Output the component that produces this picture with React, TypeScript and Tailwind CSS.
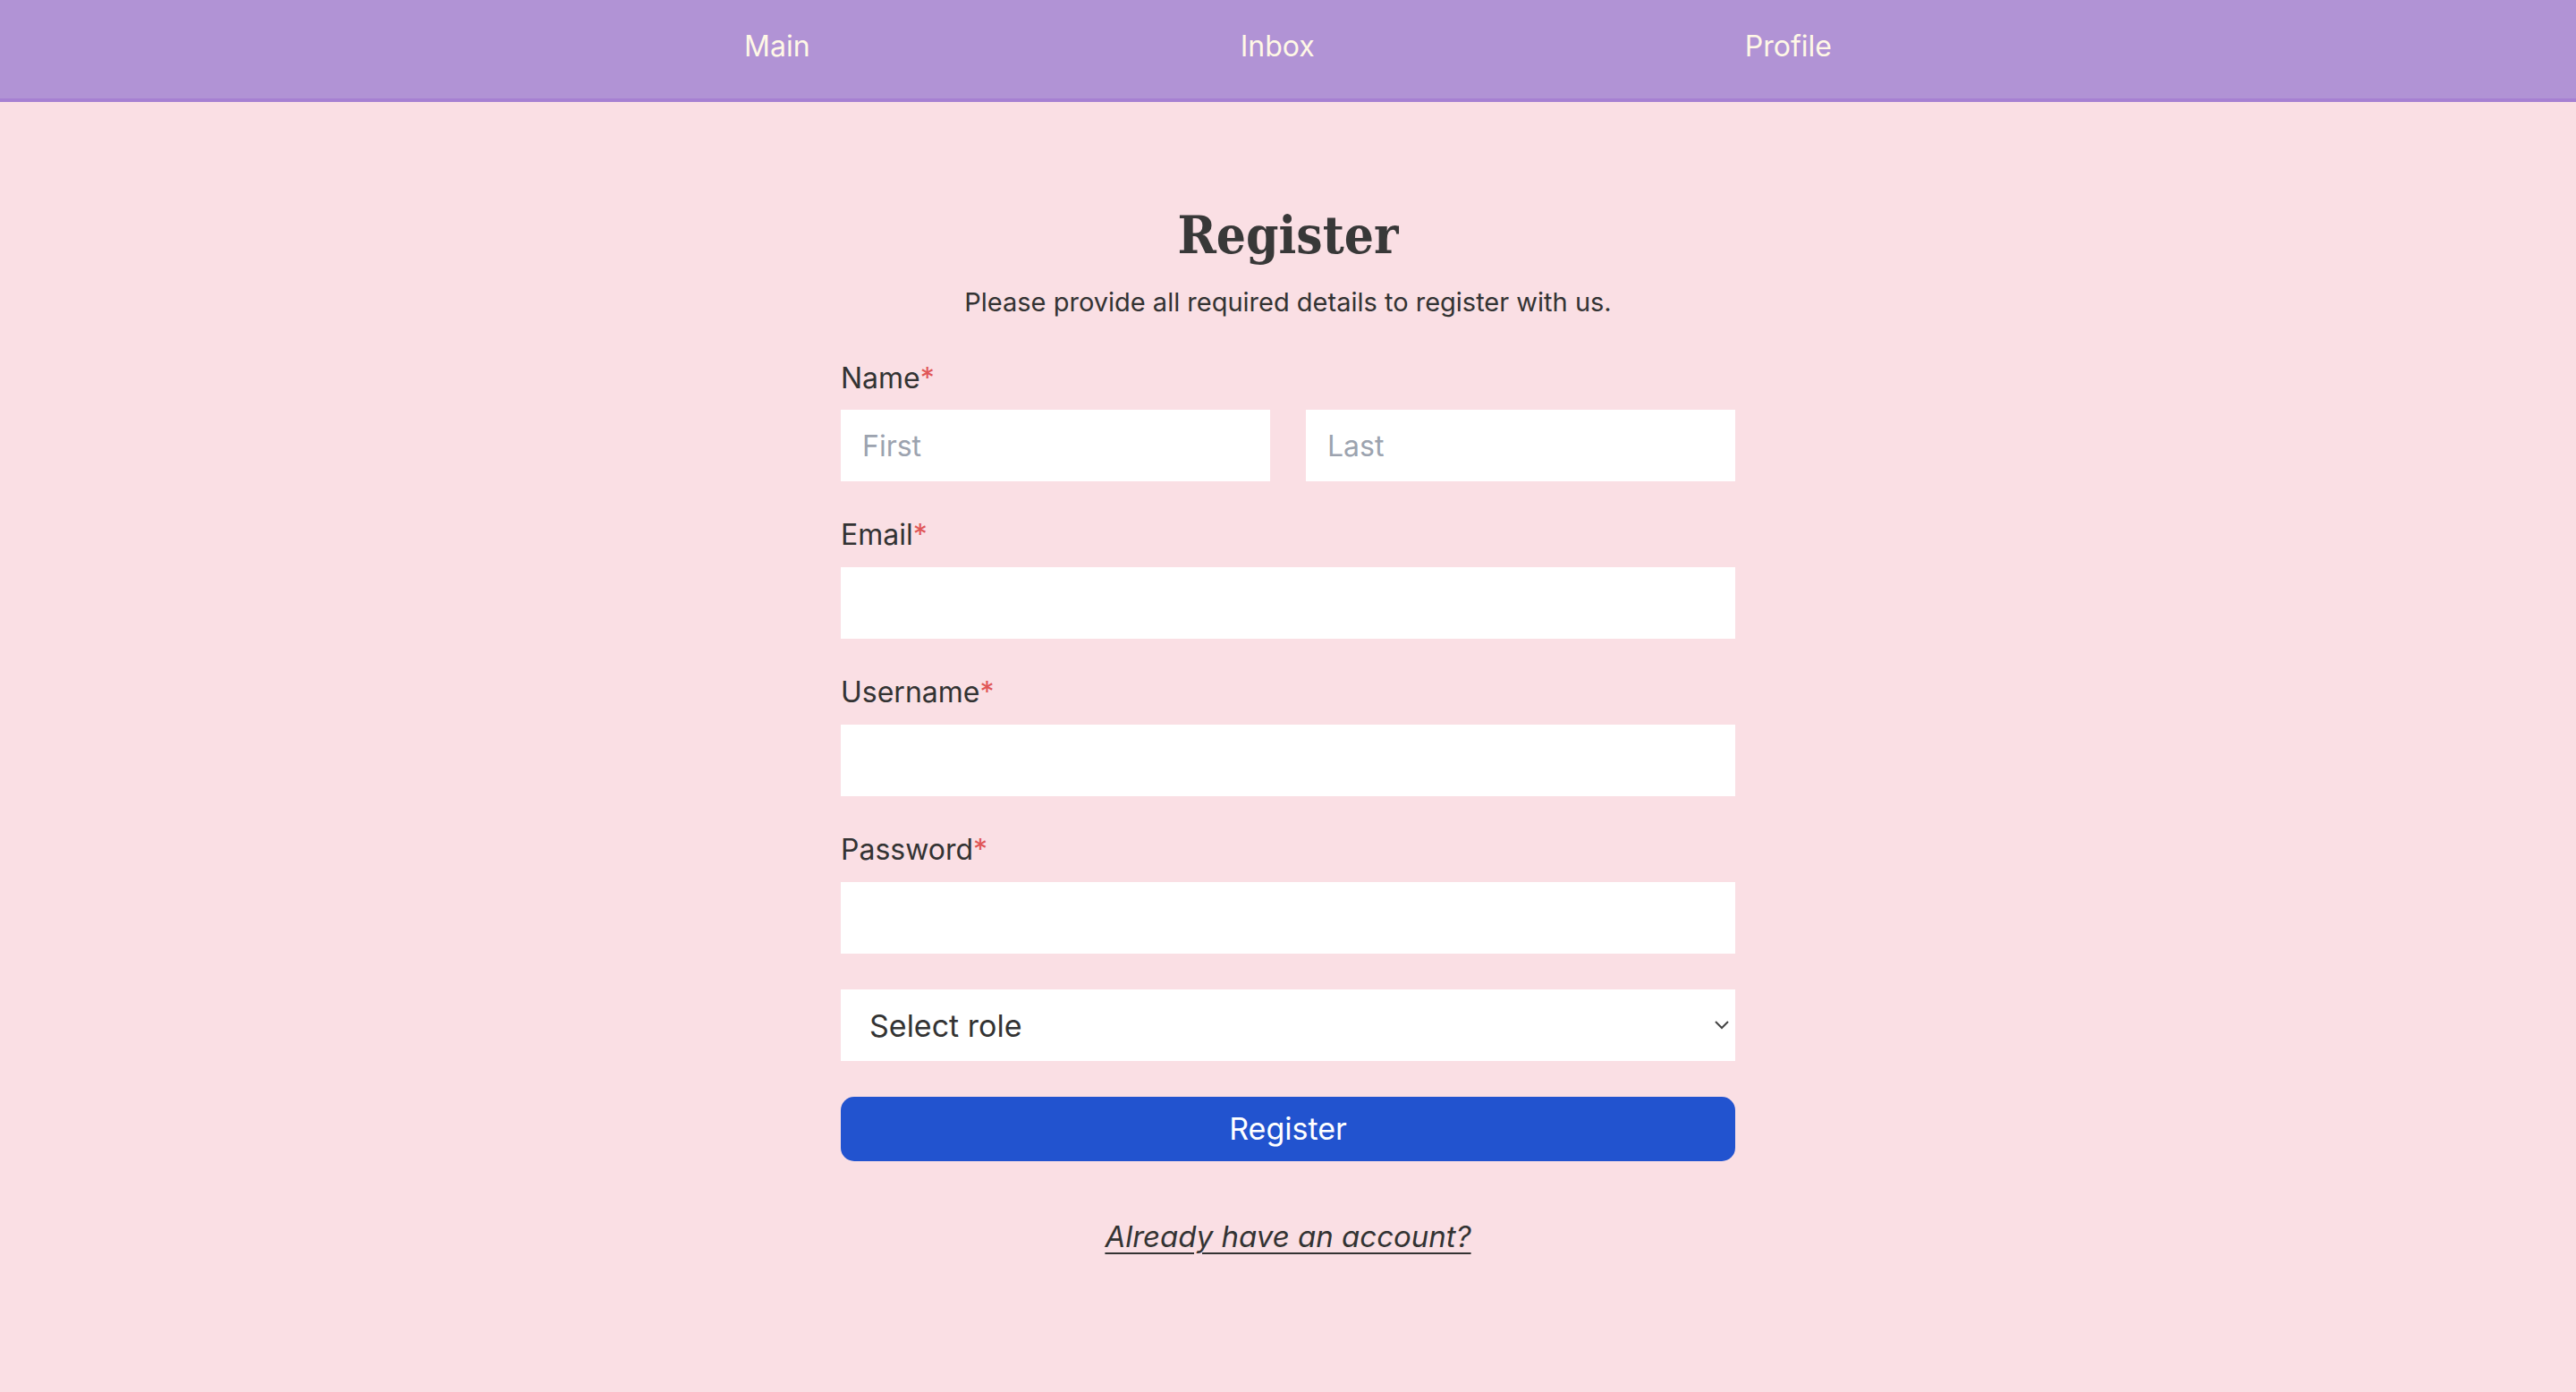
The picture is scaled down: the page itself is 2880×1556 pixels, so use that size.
import React from "react";

const fields = [
  { label: "Email", type: "email" },
  { label: "Username", type: "text" },
  { label: "Password", type: "password" },
];

function Label({ text }: { text: string }) {
  return (
    <label className="block text-[32px] leading-[48px] text-[#333333]">
      {text}
      <span className="text-[#e05656]">*</span>
    </label>
  );
}

export default function App() {
  return (
    <div className="min-h-screen bg-[#fadfe4] font-['Inter',sans-serif] text-[#333333]">
      {/* Top nav */}
      <nav className="h-[114px] bg-[#b193d5] border-b-4 border-[#a680d2]">
        <ul className="w-[1697px] mx-auto flex justify-around pt-[28px] text-[32px] leading-[48px] text-[#fff8e6]">
          <li>Main</li>
          <li>Inbox</li>
          <li>Profile</li>
        </ul>
      </nav>

      <main className="w-[1000px] mx-auto pt-[117px] pb-[100px]">
        <h1 className="text-center font-['DejaVu_Serif_Condensed','DejaVu_Serif',serif] font-bold text-[58px] leading-[64px] text-[#383838]">
          Register
        </h1>
        <p className="mt-[23px] text-center text-[29px] leading-[40px]">
          Please provide all required details to register with us.
        </p>

        <form className="mt-[41px] flex flex-col">
          <Label text="Name" />
          <div className="mt-[11px] flex gap-[40px]">
            <input
              placeholder="First"
              className="w-[480px] h-[80px] bg-white px-[24px] text-[32px] outline-none placeholder:text-[#9ca3af]"
            />
            <input
              placeholder="Last"
              className="w-[480px] h-[80px] bg-white px-[24px] text-[32px] outline-none placeholder:text-[#9ca3af]"
            />
          </div>

          {fields.map((f) => (
            <div key={f.label} className="mt-[36px]">
              <Label text={f.label} />
              <input
                type={f.type}
                className="mt-[12px] w-full h-[80px] bg-white px-[24px] text-[32px] outline-none"
              />
            </div>
          ))}

          <div className="relative mt-[40px]">
            <select className="w-full h-[80px] bg-white pl-[32px] text-[34px] text-[#333333] appearance-none outline-none">
              <option>Select role</option>
              <option>Student</option>
              <option>Teacher</option>
            </select>
            <svg
              className="absolute right-[7px] top-[35px] pointer-events-none"
              width="16"
              height="10"
              viewBox="0 0 16 10"
              fill="none"
            >
              <polyline points="1,1 8,8 15,1" stroke="#444444" strokeWidth="2" />
            </svg>
          </div>

          <button
            type="button"
            className="mt-[40px] h-[72px] rounded-[15px] bg-[#2253cf] text-white text-[34px] leading-[48px]"
          >
            Register
          </button>

          <div className="mt-[60px] text-center">
            <a className="italic underline decoration-2 underline-offset-[6px] text-[33px] leading-[48px] text-[#333333]">
              Already have an account?
            </a>
          </div>
        </form>
      </main>
    </div>
  );
}
